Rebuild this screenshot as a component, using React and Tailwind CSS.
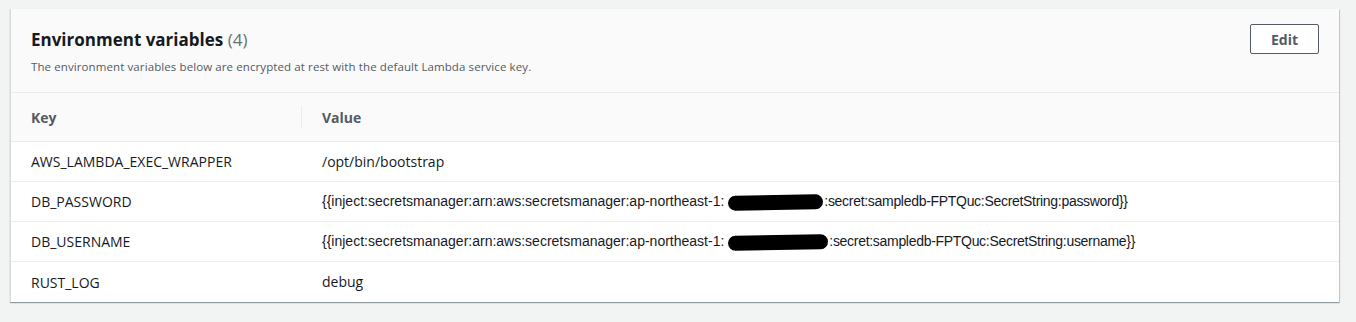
import React from "react";

const rows = [
  { k: "AWS_LAMBDA_EXEC_WRAPPER", v: "/opt/bin/bootstrap" },
  { k: "DB_PASSWORD", secret: "password", blob: 95 },
  { k: "DB_USERNAME", secret: "username", blob: 100 },
  { k: "RUST_LOG", v: "debug" },
];

function Blob({ w }) {
  return (
    <span className="inline-block align-middle ml-[4px] mr-[1px] h-[15px] bg-black rounded-[8px] -rotate-1" style={{ width: w }} />
  );
}

export default function App() {
  return (
    <div className="w-[1356px] h-[322px] bg-[#f2f3f3] pt-[9px] pl-[10px] font-['Open_Sans',sans-serif]">
      <div className="w-[1329px] bg-white border-l border-[#d5dbdb] shadow-[0_1px_1px_0_rgba(0,28,36,0.3),1px_1px_1px_0_rgba(0,28,36,0.15)]">
        <div className="h-[84px] bg-[#fafafa] border-b border-[#eaeded] flex justify-between px-[20px] pt-[20px]">
          <div>
            <h2 className="text-[17px] leading-[22px] font-bold text-[#16191f]">
              Environment variables <span className="font-normal text-[#687078]">(4)</span>
            </h2>
            <p className="mt-[9px] text-[11.5px] leading-[14px] tracking-[0.1px] text-[#545b64]">
              The environment variables below are encrypted at rest with the default Lambda service key.
            </p>
          </div>
          <button className="mt-[-5px] w-[69px] h-[30px] border border-[#545b64] rounded-[2px] bg-white text-[14px] font-bold text-[#545b64]">
            Edit
          </button>
        </div>
        <div className="h-[49px] bg-[#fafafa] border-b border-[#eaeded] flex items-center text-[14px] font-bold text-[#545b64]">
          <div className="w-[290px] pl-[20px]">Key</div>
          <div className="h-[23px] border-l border-[#eaeded] pl-[20px] flex items-center">Value</div>
        </div>
        {rows.map((r, i) => (
          <div
            key={r.k}
            className={`h-[40px] flex items-center text-[14px] text-[#16191f] ${i < rows.length - 1 ? "border-b border-[#eaeded]" : ""}`}
          >
            <div className="w-[291px] pl-[20px]">{r.k}</div>
            <div className="pl-[20px] font-['Liberation_Sans',sans-serif] text-[14px] whitespace-nowrap">
              {r.v ? (
                <span className="font-['Open_Sans',sans-serif]">{r.v}</span>
              ) : (
                <>
                  {"{{inject:secretsmanager:arn:aws:secretsmanager:ap-northeast-1:"}
                  <Blob w={r.blob} />
                  <span className="tracking-[-0.3px]">{`:secret:sampledb-FPTQuc:SecretString:${r.secret}}}`}</span>
                </>
              )}
            </div>
          </div>
        ))}
      </div>
    </div>
  );
}
